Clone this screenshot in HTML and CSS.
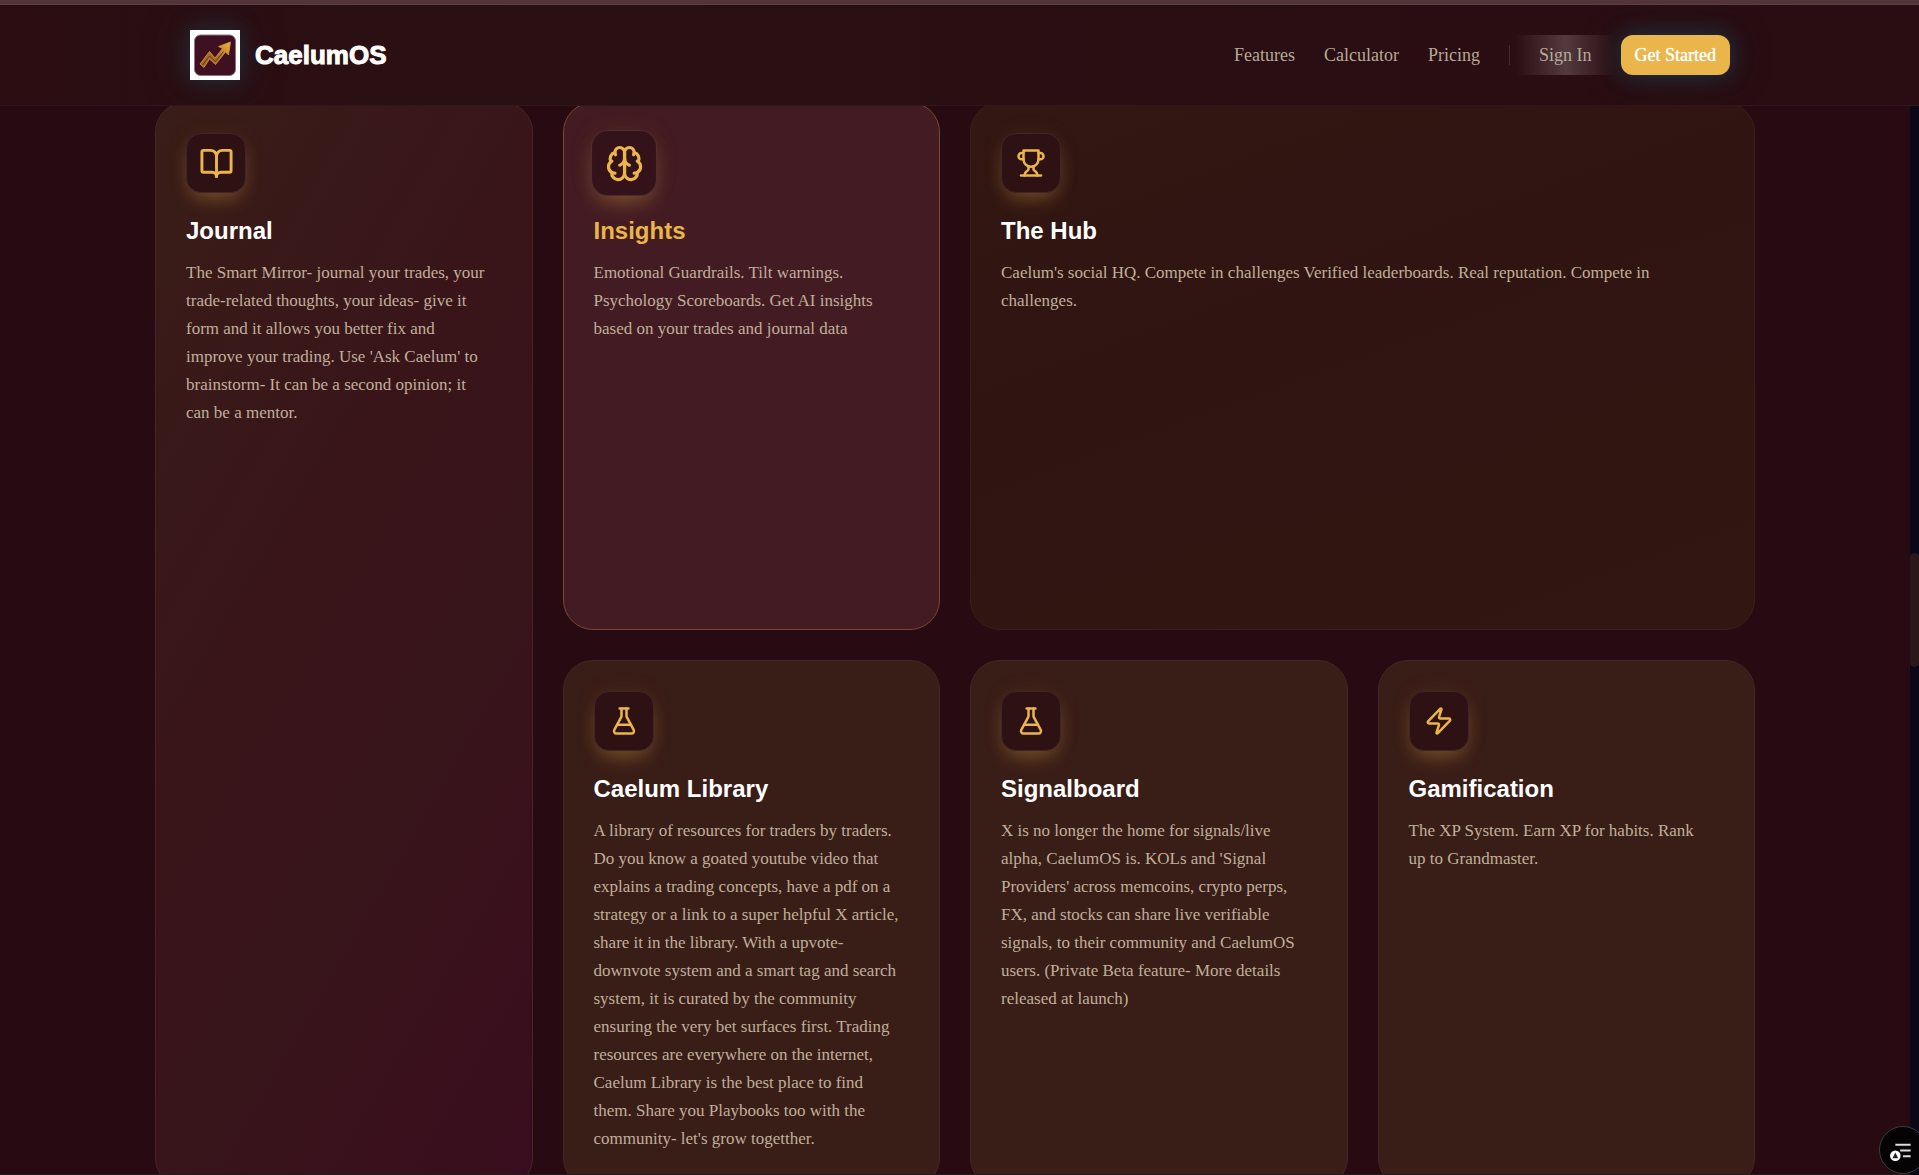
FILE: index.html
```html
<!DOCTYPE html>
<html lang="en">
<head>
<meta charset="utf-8">
<title>CaelumOS</title>
<link rel="stylesheet" href="styles.css">
</head>
<body>
<svg class="sprite" aria-hidden="true">
  <symbol id="book" viewBox="0 0 24 24"><path d="M12 7v14"/><path d="M3 18a1 1 0 0 1-1-1V4a1 1 0 0 1 1-1h5a4 4 0 0 1 4 4 4 4 0 0 1 4-4h5a1 1 0 0 1 1 1v13a1 1 0 0 1-1 1h-6a3 3 0 0 0-3 3 3 3 0 0 0-3-3z"/></symbol>
  <symbol id="brain" viewBox="0 0 24 24"><path d="M12 5a3 3 0 1 0-5.997.125 4 4 0 0 0-2.526 5.77 4 4 0 0 0 .556 6.588A4 4 0 1 0 12 18Z"/><path d="M12 5a3 3 0 1 1 5.997.125 4 4 0 0 1 2.526 5.77 4 4 0 0 1-.556 6.588A4 4 0 1 1 12 18Z"/><path d="M15 13a4.5 4.5 0 0 1-3-4 4.5 4.5 0 0 1-3 4"/><path d="M17.599 6.5a3 3 0 0 0 .399-1.375"/><path d="M6.003 5.125A3 3 0 0 0 6.401 6.5"/><path d="M3.477 10.896a4 4 0 0 1 .585-.396"/><path d="M19.938 10.5a4 4 0 0 1 .585.396"/><path d="M6 18a4 4 0 0 1-1.967-.516"/><path d="M19.967 17.484A4 4 0 0 1 18 18"/></symbol>
  <symbol id="trophy" viewBox="0 0 24 24"><path d="M6 9H4.500a2.500 2.500 0 0 1 0-5H6"/><path d="M18 9h1.500a2.500 2.500 0 0 0 0-5H18"/><path d="M4 22h16"/><path d="M10 14.660V17c0 .55-.47.98-.97 1.210C7.850 18.750 7 20.240 7 22"/><path d="M14 14.660V17c0 .55.47.98.97 1.210C16.150 18.750 17 20.240 17 22"/><path d="M18 2H6v7a6 6 0 0 0 12 0V2Z"/></symbol>
  <symbol id="flask" viewBox="0 0 24 24"><path d="M14 2v6a2 2 0 0 0 .245.960l5.510 10.080A2 2 0 0 1 18 22H6a2 2 0 0 1-1.755-2.960l5.510-10.080A2 2 0 0 0 10 8V2"/><path d="M6.453 15h11.094"/><path d="M8.500 2h7"/></symbol>
  <symbol id="zap" viewBox="0 0 24 24"><path d="M4 14a1 1 0 0 1-.78-1.630l9.900-10.200a.5.5 0 0 1 .86.460l-1.920 6.020A1 1 0 0 0 13 10h7a1 1 0 0 1 .78 1.630l-9.900 10.200a.5.5 0 0 1-.86-.46l1.920-6.020A1 1 0 0 0 11 14z"/></symbol>
</svg>

<div class="progress"></div>
<header class="header">
  <div class="header-inner">
    <a class="brand" href="#">
      <svg class="logo" viewBox="0 0 50 50" aria-hidden="true">
        <defs><linearGradient id="gold" x1="0" y1="1" x2="1" y2="0"><stop offset="0" stop-color="#a8641c"/><stop offset=".5" stop-color="#a9702c"/><stop offset="1" stop-color="#f0b83c"/></linearGradient></defs>
        <rect width="50" height="50" fill="#fff"/>
        <rect x="4.500" y="5" width="41" height="40.500" rx="6" fill="#3f1021" stroke="#8c7480"/>
        <path d="M10 34 19.500 21.500 25 28 32.500 18.500 28.500 16.500 40.500 12 38.500 25 35.500 22 25.500 34.500 19.500 29 14 37.500Z" fill="url(#gold)" stroke="#d49a34" stroke-width=".8"/>
        <path d="M12.500 35 19.500 26 25.500 31.500 33.500 21.500" fill="none" stroke="#6a3420" stroke-width="1"/>
      </svg>
      <span class="brand-name">CaelumOS</span>
    </a>
    <nav class="nav">
      <a href="#">Features</a>
      <a href="#">Calculator</a>
      <a href="#">Pricing</a>
      <span class="divider"></span>
      <button class="sign-in" type="button">Sign In</button>
      <button class="start" type="button">Get Started</button>
    </nav>
  </div>
</header>

<main class="main">
  <section class="grid">
    <article class="card tall">
      <div class="icon"><svg class="lg"><use href="#book"/></svg></div>
      <h3>Journal</h3>
      <p>The Smart Mirror- journal your trades, your trade-related thoughts, your ideas- give it form and it allows you better fix and improve your trading. Use 'Ask Caelum' to brainstorm- It can be a second opinion; it can be a mentor.</p>
    </article>
    <article class="card active">
      <div class="icon"><svg class="lg"><use href="#brain"/></svg></div>
      <h3>Insights</h3>
      <p>Emotional Guardrails. Tilt warnings. Psychology Scoreboards. Get AI insights based on your trades and journal data</p>
    </article>
    <article class="card wide">
      <div class="icon"><svg><use href="#trophy"/></svg></div>
      <h3>The Hub</h3>
      <p>Caelum's social HQ. Compete in challenges Verified leaderboards. Real reputation. Compete in challenges.</p>
    </article>
    <article class="card">
      <div class="icon"><svg><use href="#flask"/></svg></div>
      <h3>Caelum Library</h3>
      <p>A library of resources for traders by traders. Do you know a goated youtube video that explains a trading concepts, have a pdf on a strategy or a link to a super helpful X article, share it in the library. With a upvote-downvote system and a smart tag and search system, it is curated by the community ensuring the very bet surfaces first. Trading resources are everywhere on the internet, Caelum Library is the best place to find them. Share you Playbooks too with the community- let's grow togetther.</p>
    </article>
    <article class="card">
      <div class="icon"><svg><use href="#flask"/></svg></div>
      <h3>Signalboard</h3>
      <p>X is no longer the home for signals/live alpha, CaelumOS is. KOLs and 'Signal Providers' across memcoins, crypto perps, FX, and stocks can share live verifiable signals, to their community and CaelumOS users. (Private Beta feature- More details released at launch)</p>
    </article>
    <article class="card">
      <div class="icon"><svg><use href="#zap"/></svg></div>
      <h3>Gamification</h3>
      <p>The XP System. Earn XP for habits. Rank up&nbsp;to Grandmaster.</p>
    </article>
  </section>
</main>

<div class="scrollbar"><div class="thumb"></div></div>
<button class="widget" type="button" aria-label="Reading list">
  <svg viewBox="0 0 48 48" aria-hidden="true"><path d="M16 18.500h16M21 24.500h11M24 30.500h8" stroke="#ddd" stroke-width="2"/><circle cx="16" cy="30" r="5.500" fill="#fff"/><path d="M16 26.500l3 6h-6z" fill="#222"/></svg>
</button>
</body>
</html>
```
FILE: styles.css
```css
* { box-sizing: border-box; }

body {
  margin: 0;
  height: 100vh;
  display: flex;
  flex-direction: column;
  overflow: hidden;
  background: #270a12;
  color: #b8a996;
  font-family: "Liberation Serif", "Times New Roman", serif;
  font-size: 18px;
}

.sprite { position: absolute; width: 0; height: 0; }

.progress {
  height: 5px;
  flex: none;
  background: #533439;
  border-bottom: 1px solid #55433f;
}

.header {
  position: relative;
  z-index: 1;
  flex: none;
  height: 101px;
  padding-right: 9px;
  overflow: hidden;
  background: linear-gradient(90deg, #2b0d12, #2a0f13 20%, #290d12);
  border-bottom: 1px solid #30171b;
}

.header-inner {
  max-width: 1600px;
  height: 100%;
  margin: 0 auto;
  padding: 0 25px 0 35px;
  display: flex;
  align-items: center;
  justify-content: space-between;
}

.brand {
  display: flex;
  align-items: center;
  gap: 15px;
  color: #fff;
  text-decoration: none;
}

.logo {
  width: 50px;
  height: 50px;
  box-shadow: 0 0 40px #22384488, 0 0 20px #22384488;
}

.brand-name {
  font: 900 26px/30px "Liberation Sans", Arial, sans-serif;
  -webkit-text-stroke: 1px #fff;
}

.nav {
  display: flex;
  align-items: center;
}

.nav a {
  margin-right: 29px;
  color: #b8a996;
  text-decoration: none;
}

.divider {
  width: 1px;
  height: 20px;
  background: #47292d;
}

.nav button {
  height: 40px;
  border: 0;
  font: inherit;
}

.sign-in {
  padding: 0 29px;
  color: #b8a996;
  background: linear-gradient(88deg, transparent 5%, #533a3e 50%, transparent 95%);
}

.nav .start {
  padding: 0 14px;
  border-radius: 12px;
  background: #eab54a;
  color: #fff;
  text-shadow: 0 0 1px #fff;
  box-shadow: 0 0 20px #1e333e, 0 0 40px #22384466;
}

.main {
  flex: 1;
  min-height: 0;
  overflow: hidden;
  padding-right: 9px;
  border-bottom: 1px solid #241b1b;
}

.grid {
  max-width: 1600px;
  margin: -4px auto 0;
  display: grid;
  grid-template-columns: repeat(4, 1fr);
  grid-auto-rows: minmax(528px, auto);
  gap: 30px;
}

.card {
  padding: 30px;
  border: 1px solid #452826;
  border-radius: 30px;
  background: #391d17;
}

.tall {
  grid-row: span 2;
  background: linear-gradient(120deg, #391d17, #39151a 40%, #38141b 65%, #3a0d1e);
}

.wide {
  grid-column: span 2;
  border-color: #3b2019;
  background: linear-gradient(160deg, #321713, #2f1411 40%, #311612);
}

.active {
  border-color: #79482d;
  background: #431b22;
}

.icon {
  width: 60px;
  height: 60px;
  display: grid;
  place-items: center;
  border: 1px solid #40242a;
  border-radius: 15px;
  background: #2d1113;
  box-shadow: 0 10px 20px -5px #eab54a55, 0 0 25px #eab54a10;
}

.active .icon { transform: scale(1.1); border-color: #4e2c34; background: #331219; }

.icon svg {
  width: 30px;
  height: 30px;
  fill: none;
  stroke: #eab54a;
  stroke-width: 2;
  stroke-linecap: round;
  stroke-linejoin: round;
}

.icon .lg { width: 35px; height: 35px; }

h3 {
  margin: 20px 0 11px;
  color: #fff;
  font: bold 24px/35px "Liberation Sans", Arial, sans-serif;
}

.active h3 { color: #eab54a; }

p {
  margin: 0;
  padding-right: 10px;
  color: #c0af9a;
  font-size: 17px;
  line-height: 28px;
}

.scrollbar {
  position: fixed;
  top: 106px;
  right: 0;
  bottom: 0;
  width: 9px;
  background: #0b0716;
}

.thumb {
  height: 114px;
  margin-top: 447px;
  border-radius: 5px;
  background: #2a171a;
}

.widget {
  position: fixed;
  right: -8px;
  bottom: 1px;
  width: 48px;
  height: 48px;
  padding: 0;
  border: 1px solid #3c3c3c;
  border-radius: 50%;
  background: #050304;
}
```
